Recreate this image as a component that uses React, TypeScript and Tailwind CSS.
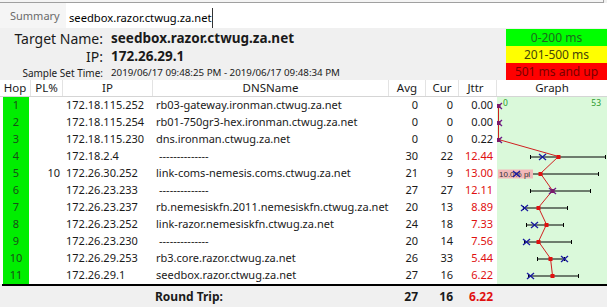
import React from "react";

type Row = {
  hop: number;
  pl: string;
  ip: string;
  dns: string;
  avg: number;
  cur: number;
  jttr: string;
  red: boolean;
  min: number;
  max: number;
};

const rows: Row[] = [
  { hop: 1, pl: "", ip: "172.18.115.252", dns: "rb03-gateway.ironman.ctwug.za.net", avg: 0, cur: 0, jttr: "0.00", red: false, min: 0, max: 0 },
  { hop: 2, pl: "", ip: "172.18.115.254", dns: "rb01-750gr3-hex.ironman.ctwug.za.net", avg: 0, cur: 0, jttr: "0.00", red: false, min: 0, max: 0 },
  { hop: 3, pl: "", ip: "172.18.115.230", dns: "dns.ironman.ctwug.za.net", avg: 0, cur: 0, jttr: "0.22", red: false, min: 0, max: 0 },
  { hop: 4, pl: "", ip: "172.18.2.4", dns: "--------------", avg: 30, cur: 22, jttr: "12.44", red: true, min: 16, max: 53.5 },
  { hop: 5, pl: "10", ip: "172.26.30.252", dns: "link-coms-nemesis.coms.ctwug.za.net", avg: 21, cur: 9, jttr: "13.00", red: true, min: 8, max: 50 },
  { hop: 6, pl: "", ip: "172.26.23.233", dns: "--------------", avg: 27, cur: 27, jttr: "12.11", red: true, min: 16, max: 46 },
  { hop: 7, pl: "", ip: "172.26.23.237", dns: "rb.nemesiskfn.2011.nemesiskfn.ctwug.za.net", avg: 20, cur: 13, jttr: "8.89", red: true, min: 12.5, max: 34.5 },
  { hop: 8, pl: "", ip: "172.26.23.252", dns: "link-razor.nemesiskfn.ctwug.za.net", avg: 24, cur: 18, jttr: "7.33", red: true, min: 14, max: 32.5 },
  { hop: 9, pl: "", ip: "172.26.23.230", dns: "--------------", avg: 20, cur: 14, jttr: "7.56", red: true, min: 13, max: 36.5 },
  { hop: 10, pl: "", ip: "172.26.29.253", dns: "rb3.core.razor.ctwug.za.net", avg: 26, cur: 33, jttr: "5.44", red: true, min: 19.5, max: 33 },
  { hop: 11, pl: "", ip: "172.26.29.1", dns: "seedbox.razor.ctwug.za.net", avg: 27, cur: 16, jttr: "6.22", red: true, min: 15, max: 40 },
];

const ROW_H = 17;

function Graph() {
  const h = ROW_H * rows.length;
  const px = (v: number) => 1.5 + 2 * v;
  const py = (i: number) => 8.5 + ROW_H * i;
  const pts = rows.map((r, i) => `${px(r.avg)},${py(i)}`).join(" ");
  return (
    <svg width={110} height={h} className="block">
      <rect x={0} y={0} width={110} height={h} fill="#daf9da" />
      {rows.map((r, i) =>
        r.max > 0 ? (
          <g key={"b" + i} stroke="#000" strokeWidth={1}>
            <line x1={px(r.min)} y1={py(i) + 0.5} x2={px(r.max)} y2={py(i) + 0.5} />
            <line x1={px(r.min)} y1={py(i) - 1.5} x2={px(r.min)} y2={py(i) + 2.5} />
            <line x1={px(r.max)} y1={py(i) - 1.5} x2={px(r.max)} y2={py(i) + 2.5} />
          </g>
        ) : null
      )}
      <rect x={1} y={py(4) - 4} width={35} height={9} fill="#f2b9b9" />
      <text x={2} y={py(4) + 3} fontSize={8} fill="#333" fontFamily="'Liberation Sans', sans-serif">
        10.0% pl
      </text>
      <polyline points={pts} fill="none" stroke="#d02020" strokeWidth={1} />
      {rows.map((r, i) => (
        <g key={"x" + i} stroke={r.cur === r.avg ? "#6a1a8a" : "#1a1aa0"} strokeWidth={1.3}>
          <line x1={px(r.cur) - 3.5} y1={py(i) - 2.5} x2={px(r.cur) + 3.5} y2={py(i) + 3.5} />
          <line x1={px(r.cur) - 3.5} y1={py(i) + 3.5} x2={px(r.cur) + 3.5} y2={py(i) - 2.5} />
        </g>
      ))}
      {rows.map((r, i) => (
        <rect key={"d" + i} x={px(r.avg) - 2} y={py(i) - 1.5} width={4} height={4} fill={r.cur === r.avg ? "#7a1a6a" : "#e01010"} />
      ))}
      <text x={6} y={9} fontSize={8.5} fill="#2e9a2e" fontFamily="'Noto Sans', sans-serif">
        0
      </text>
      <text x={104} y={9} fontSize={8.5} fill="#2e9a2e" textAnchor="end" fontFamily="'Noto Sans', sans-serif">
        53
      </text>
    </svg>
  );
}

export default function App() {
  return (
    <div className="w-[607px] h-[307px] overflow-hidden bg-[#f0f0f0] font-['Noto_Sans',sans-serif] text-[#1a1a1a] flex flex-col">
      {/* top edge of box above */}
      <div className="h-[3px] w-[604px] bg-[#f4f4f4] border-b border-r border-[#a0a0a0] shrink-0" />
      {/* tabs */}
      <div className="h-[25px] bg-white flex shrink-0">
        <div className="w-[66px] bg-[#f5f5f5] flex items-center pl-[10px] text-[11px] text-[#6a6a6a] pt-[2px]">Summary</div>
        <div className="w-[147px] mt-[5px] h-[20px] bg-white border-r border-[#333] flex items-center pl-[3px] text-[11.2px] text-black whitespace-nowrap">
          seedbox.razor.ctwug.za.net
        </div>
      </div>
      {/* summary header */}
      <div className="h-[52px] flex shrink-0">
        <div className="flex-1 pt-[2px] grid grid-cols-[103px_1fr] gap-x-[8px] items-center">
          <div className="h-[18px] flex items-center justify-end text-[14px] leading-none whitespace-nowrap">Target Name:</div>
          <div className="h-[18px] flex items-center font-bold text-[13.5px] leading-none whitespace-nowrap">seedbox.razor.ctwug.za.net</div>
          <div className="h-[17px] flex items-center justify-end text-[14px] leading-none">IP:</div>
          <div className="h-[17px] flex items-center font-bold text-[13.5px] leading-none">172.26.29.1</div>
          <div className="h-[15px] flex items-center justify-end text-[10px] leading-none whitespace-nowrap">Sample Set Time:</div>
          <div className="h-[15px] flex items-center text-[9.75px] leading-none whitespace-nowrap">2019/06/17 09:48:25 PM - 2019/06/17 09:48:34 PM</div>
        </div>
        <div className="w-[101px] pt-[1px] flex flex-col text-[12px] leading-none">
          <div className="h-[17px] bg-[#00ff00] flex items-center justify-center text-[#1d6a1d]">0-200 ms</div>
          <div className="h-[17px] bg-[#ffff00] flex items-center justify-center text-[#45450a]">201-500 ms</div>
          <div className="h-[17px] bg-[#ff0000] flex items-center justify-center text-[#780000]">501 ms and up</div>
        </div>
      </div>
      {/* table */}
      <div className="flex bg-white shrink-0">
        <div className="w-[497px] flex flex-col text-[11px]">
          <div className="h-[17px] flex border-b border-[#d5d5d5] text-[11.5px]">
            <div className="w-[31px] border-r border-[#e3e3e3] flex items-center justify-center">Hop</div>
            <div className="w-[32px] border-r border-[#e3e3e3] flex items-center justify-center">PL%</div>
            <div className="w-[90px] border-r border-[#e3e3e3] flex items-center justify-center">IP</div>
            <div className="w-[236px] border-r border-[#e3e3e3] flex items-center justify-center">DNSName</div>
            <div className="w-[37px] border-r border-[#e3e3e3] flex items-center justify-center">Avg</div>
            <div className="w-[33px] border-r border-[#e3e3e3] flex items-center justify-center">Cur</div>
            <div className="w-[38px] border-r border-[#e3e3e3] flex items-center justify-center pr-[4px]">Jttr</div>
          </div>
          {rows.map((r) => (
            <div key={r.hop} className="h-[17px] flex items-stretch">
              <div className="w-[31px] pl-[3px] pr-[2px] flex">
                <div className="flex-1 bg-[#00ee00] flex items-center justify-center text-[#1a4f1a]">{r.hop}</div>
              </div>
              <div className="w-[32px] flex items-center justify-end pr-[3px]">{r.pl}</div>
              <div className="w-[90px] flex items-center pl-[3px]">{r.ip}</div>
              <div className={"w-[236px] flex items-center whitespace-nowrap overflow-hidden " + (r.dns.startsWith("-") ? "pl-[6px]" : "pl-[3px]")}>
                {r.dns}
              </div>
              <div className="w-[37px] flex items-center justify-end pr-[8px]">{r.avg}</div>
              <div className="w-[33px] flex items-center justify-end pr-[6px]">{r.cur}</div>
              <div className={"w-[38px] flex items-center justify-end pr-[4px] " + (r.red ? "text-[#e01010]" : "")}>{r.jttr}</div>
            </div>
          ))}
        </div>
        <div className="w-[110px] flex flex-col">
          <div className="h-[17px] border-b border-[#d5d5d5] flex items-center justify-center text-[11.5px]">Graph</div>
          <Graph />
        </div>
      </div>
      <div className="ml-[2px] h-[2px] bg-black shrink-0" />
      <div className="flex h-[21px] items-center font-bold text-[12px]">
        <div className="w-[155px]" />
        <div className="w-[234px]">Round Trip:</div>
        <div className="w-[37px] text-right pr-[8px]">27</div>
        <div className="w-[33px] text-right pr-[6px]">16</div>
        <div className="w-[38px] text-right pr-[4px] text-[#e01010]">6.22</div>
      </div>
    </div>
  );
}
